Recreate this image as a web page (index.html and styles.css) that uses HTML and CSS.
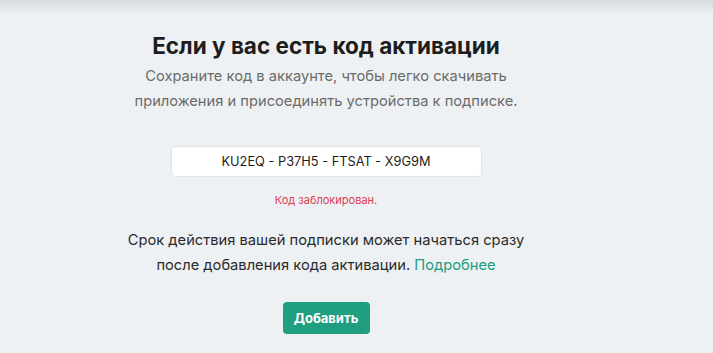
FILE: index.html
```html
<!DOCTYPE html>
<html lang="ru">

<head>
    <meta charset="UTF-8">
    <meta name="viewport" content="width=device-width, initial-scale=1.0">
    <title>Код активации</title>
    <link rel="stylesheet" href="styles.css">
</head>

<body>
    <div class="topbar"></div>
    <main class="activation">
        <h1>Если у вас есть код активации</h1>
        <p class="lead">Сохраните код в аккаунте, чтобы легко скачивать<br>приложения и присоединять устройства к подписке.</p>

        <div class="code-field">
            <input type="text" value="KU2EQ - P37H5 - FTSAT - X9G9M">
        </div>
        <div class="error">Код заблокирован.</div>

        <p class="note">Срок действия вашей подписки может начаться сразу<br>после добавления кода активации. <a href="#">Подробнее</a></p>

        <button class="btn">Добавить</button>
    </main>
</body>

</html>
```

FILE: styles.css
```css
* {
    box-sizing: border-box;
    margin: 0;
    padding: 0;
}

body {
    background-color: #eef1f4;
    font-family: Inter, "Noto Sans", sans-serif;
    height: 353px;
    overflow: hidden;
}

.topbar {
    height: 14px;
    background: linear-gradient(#d6dadd, #eef1f4);
}

.activation {
    width: 652px;
    display: flex;
    flex-direction: column;
    align-items: center;
    text-align: center;
}

h1 {
    margin-top: 19px;
    font-size: 22.5px;
    font-weight: 700;
    color: #1d1d1b;
    line-height: 26px;
}

.lead {
    margin-top: 5px;
    font-size: 14.7px;
    line-height: 25px;
    color: #6b6b6b;
}

.code-field {
    margin-top: 32px;
}

.code-field input {
    width: 311px;
    height: 31px;
    border: 1px solid #e1e4e7;
    border-radius: 4px;
    background: #fff;
    text-align: center;
    font-family: inherit;
    font-size: 12.8px;
    color: #1d1d1b;
    outline: none;
}

.error {
    margin-top: 16px;
    font-size: 11px;
    color: #db3c55;
}

.note {
    margin-top: 21px;
    font-size: 14.7px;
    line-height: 25px;
    color: #2b2b2b;
}

.note a {
    color: #1d9c80;
    text-decoration: none;
}

.btn {
    margin-top: 24px;
    width: 87px;
    height: 32px;
    border: none;
    border-radius: 4px;
    background-color: #1f9e80;
    color: #fff;
    font-family: inherit;
    font-size: 13px;
    font-weight: 700;
}
```
